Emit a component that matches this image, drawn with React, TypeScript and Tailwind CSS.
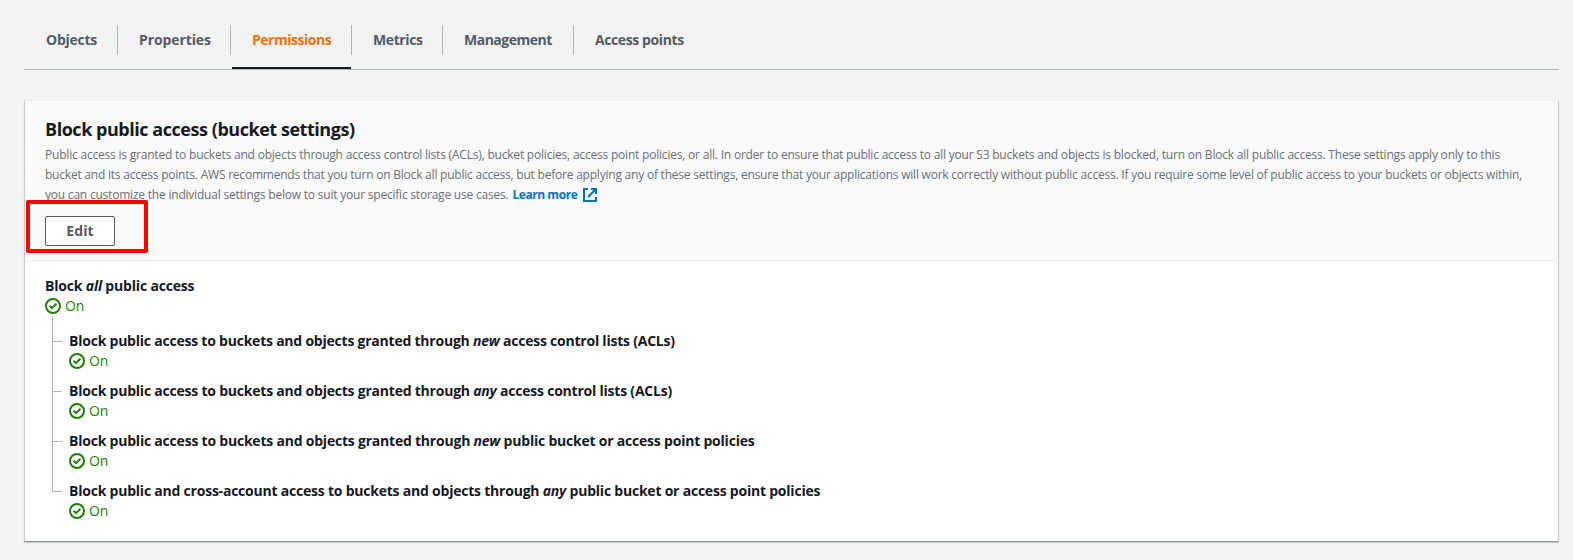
import type { ReactNode } from "react";

const tabs = [
  { label: "Objects", box: "w-[94px] pl-[22px] tracking-[-0.25px]" },
  { label: "Properties", box: "w-[113px] pl-[21px] tracking-[-0.1px]" },
  { label: "Permissions", box: "w-[121px] pl-[21px] tracking-[-0.48px]", active: true },
  { label: "Metrics", box: "w-[91px] pl-[21px] tracking-[-0.4px]" },
  { label: "Management", box: "w-[131px] pl-[21px] tracking-[-0.5px]" },
  { label: "Access points", box: "w-[131px] pl-[21px] tracking-[-0.4px]" },
];

function Status() {
  return (
    <div className="flex h-5 items-center gap-[4px] text-[#1d8102]">
      <svg className="size-4" viewBox="0 0 16 16" fill="none" stroke="currentColor" strokeWidth="2">
        <circle cx="8" cy="8" r="7" />
        <path d="M4.6 7.8 7 10.1l4.4-4.4" />
      </svg>
      <span className="tracking-[-0.1px]">On</span>
    </div>
  );
}

function Setting({ last, tracking, children }: { last?: boolean; tracking: string; children: ReactNode }) {
  return (
    <li className="flex">
      <div className="flex w-[17px] flex-col">
        <div className="h-[10px] w-px bg-[#aab7b8]" />
        <div className="h-px w-[10px] bg-[#aab7b8]" />
        {!last && <div className="w-px flex-1 bg-[#aab7b8]" />}
      </div>
      <div className={last ? "" : "pb-[10px]"}>
        <div className={`font-bold text-[#16191f] ${tracking}`}>{children}</div>
        <Status />
      </div>
    </li>
  );
}

export default function App() {
  return (
    <div className="h-[560px] bg-[#f2f3f3] pr-[14px] pl-6 font-['Open_Sans','Noto_Sans',sans-serif] text-[14px] leading-5 whitespace-nowrap">
      <nav className="flex h-[70px] border-b border-[#aab7b8] pt-[25px]">
        {tabs.map((tab, i) => (
          <div
            key={tab.label}
            className={`relative h-[30px] pt-[5px] font-bold ${tab.box} ${i < tabs.length - 1 ? "border-r border-[#aab7b8]" : ""} ${tab.active ? "text-[#ec7211]" : "text-[#545b64]"}`}
          >
            {tab.label}
            {tab.active && <span className="absolute top-[42px] right-0 left-px h-[2px] bg-[#16191f]" />}
          </div>
        ))}
      </nav>

      <section className="relative mt-[30px] h-[442px] border border-t-[#eaeded] border-r-[#c6cbcb] border-b-[#879596] border-l-[#c6cbcb] bg-white shadow-[0_1px_1px_0_rgba(0,28,36,0.15)]">
        <header className="h-[160px] border-b border-[#eaeded] bg-[#fafafa] px-5 pt-[17px]">
          <h2 className="text-[18px] leading-[22px] font-bold tracking-[-0.46px] text-[#16191f]">
            Block public access (bucket settings)
          </h2>
          <p className="mt-[5px] text-[12px] leading-5 text-[#687078]">
            <span className="block tracking-[-0.204px]">
              Public access is granted to buckets and objects through access control lists (ACLs), bucket policies, access point policies, or all. In order to ensure that public access to all your S3 buckets and objects is blocked, turn on Block all public access. These settings apply only to this
            </span>
            <span className="block tracking-[-0.218px]">
              bucket and its access points. AWS recommends that you turn on Block all public access, but before applying any of these settings, ensure that your applications will work correctly without public access. If you require some level of public access to your buckets or objects within,
            </span>
            <span className="flex">
              <span className="tracking-[-0.21px]">
                you can customize the individual settings below to suit your specific storage use cases.
              </span>
              <a className="ml-[4px] flex items-center font-bold tracking-[-0.44px] text-[#0073bb]">
                Learn more
                <svg className="ml-[6px] size-[14px]" viewBox="0 0 14 14" fill="none" stroke="currentColor" strokeWidth="2">
                  <path d="M5 1H1v12h12V9" />
                  <path d="M8 1h5v5M13 1 5 9" />
                </svg>
              </a>
            </span>
          </p>
          <button className="mt-[11px] flex h-[30px] w-[70px] items-center justify-center rounded-[2px] border border-[#545b64] bg-white font-bold tracking-[0.1px] text-[#545b64]">
            Edit
          </button>
        </header>

        <div className="px-5 pt-[15px]">
          <div className="font-bold tracking-[-0.18px] text-[#16191f]">
            Block <i>all</i> public access
          </div>
          <Status />
          <div className="ml-[7px] h-[15px] w-px bg-[#aab7b8]" />
          <ul className="ml-[7px]">
            <Setting tracking="tracking-[-0.225px]">
              Block public access to buckets and objects granted through <i>new</i> access control lists (ACLs)
            </Setting>
            <Setting tracking="tracking-[-0.22px]">
              Block public access to buckets and objects granted through <i>any</i> access control lists (ACLs)
            </Setting>
            <Setting tracking="tracking-[-0.215px]">
              Block public access to buckets and objects granted through <i>new</i> public bucket or access point policies
            </Setting>
            <Setting last tracking="tracking-[-0.22px]">
              Block public and cross-account access to buckets and objects through <i>any</i> public bucket or access point policies
            </Setting>
          </ul>
        </div>

        <div className="absolute top-[99px] left-px h-[53px] w-[122px] rounded-[2px] border-4 border-[#ff0000]" />
      </section>
    </div>
  );
}
